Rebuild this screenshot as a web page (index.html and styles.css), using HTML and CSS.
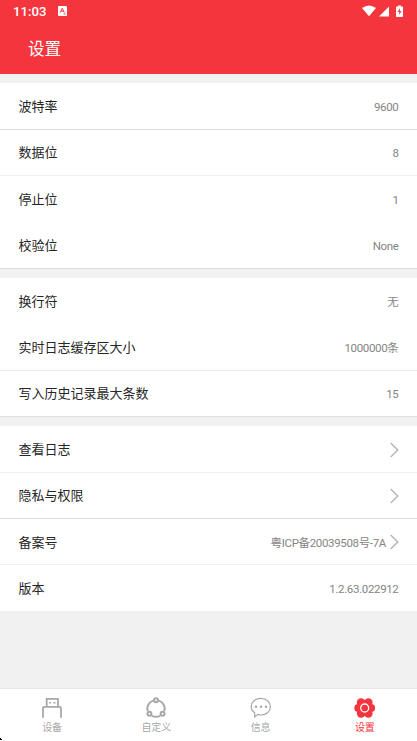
FILE: index.html
```html
<!DOCTYPE html>
<html lang="zh-CN">
<head>
<meta charset="utf-8">
<title>设置</title>
<link rel="stylesheet" href="styles.css">
</head>
<body>
<div class="app">
  <header class="header">
    <div class="status">
      <span class="clock">11:03</span>
      <svg class="badge" width="9" height="10" viewBox="0 0 9 10"><rect width="9" height="10" rx="1" fill="#fff"/><path d="M2.3 6.5 4.3 2.2 6.3 6.5M3 5.2h2.6M5.5 8h2" fill="none" stroke="#f5353d" stroke-width="1"/></svg>
      <svg class="signals" width="42" height="14" viewBox="0 0 42 14"><path d="M0 4Q7-1 14 4L7 12.3Z" fill="#fff"/><path d="M17 12.5 27 2.5v10Z" fill="#fff"/><path d="M36 1.5h3v1h1.5q.5 0 .5.6v9q0 .9-.8.9h-5.4q-.8 0-.8-.9v-9q0-.6.5-.6H36Z" fill="#fff"/><path d="M38 4 35.7 8h1.6v3L39.4 7h-1.5Z" fill="#f5353d"/></svg>
    </div>
    <h1 class="title">设置</h1>
  </header>
  <main class="content">
    <section class="group">
      <div class="row line"><span>波特率</span><span class="value">9600</span></div>
      <div class="row line faint"><span>数据位</span><span class="value">8</span></div>
      <div class="row"><span>停止位</span><span class="value">1</span></div>
      <div class="row line"><span>校验位</span><span class="value">None</span></div>
    </section>
    <section class="group">
      <div class="row"><span>换行符</span><span class="value">无</span></div>
      <div class="row line soft"><span>实时日志缓存区大小</span><span class="value">1000000条</span></div>
      <div class="row line"><span>写入历史记录最大条数</span><span class="value">15</span></div>
    </section>
    <section class="group">
      <div class="row line faint"><span>查看日志</span><svg class="arrow" viewBox="0 0 9 16"><path d="M.7.9 7.8 8 .7 15.1"/></svg></div>
      <div class="row line"><span>隐私与权限</span><svg class="arrow" viewBox="0 0 9 16"><path d="M.7.9 7.8 8 .7 15.1"/></svg></div>
      <div class="row line faint"><span>备案号</span><span class="value">粤ICP备20039508号-7A</span><svg class="arrow" viewBox="0 0 9 16"><path d="M.7.9 7.8 8 .7 15.1"/></svg></div>
      <div class="row last"><span>版本</span><span class="value">1.2.63.022912</span></div>
    </section>
  </main>
  <nav class="tabs">
    <div class="tab"><svg class="icon" viewBox="0 0 22 22"><g fill="none" stroke="currentColor" stroke-width="1.8"><path d="M5.7 9V1.8h11.2V9M3.8 9.8h15q1.2 0 1.2 1.4v9.6M3.8 9.8Q2 9.8 2 11.2v9.6"/></g><path d="M8 5h2v1.6H8zM12.5 5h2v1.6h-2z" fill="currentColor"/></svg><span>设备</span></div>
    <div class="tab"><svg class="icon" viewBox="0 0 22 22"><g fill="none" stroke="currentColor" stroke-width="2"><path d="M8.2 3.6A8.5 8.5 0 0 0 2.6 14M13.8 3.6A8.5 8.5 0 0 1 19.4 14M6.7 18.8q4.3 2 8.6 0"/><circle cx="11" cy="3.3" r="2"/><circle cx="4.4" cy="16.7" r="2"/><circle cx="17.6" cy="16.7" r="2"/></g></svg><span>自定义</span></div>
    <div class="tab"><svg class="icon" viewBox="0 0 22 22"><path d="M7.8 17.4 4.7 20v-4.2C2.4 14.3 1.2 12.2 1.2 9.8c0-4.8 4.3-8.4 9.6-8.4s9.6 3.6 9.6 8.4-4.3 8.2-9.6 8.2q-1.6 0-3-.6Z" fill="none" stroke="currentColor" stroke-width="1.2"/><g fill="currentColor"><circle cx="6" cy="9.8" r="1.25"/><circle cx="11" cy="9.8" r="1.25"/><circle cx="16" cy="9.8" r="1.25"/></g></svg><span>信息</span></div>
    <div class="tab active"><svg class="icon" viewBox="0 0 22 22"><g fill="currentColor"><circle cx="10.7" cy="11" r="8"/><circle cx="7" cy="5.4" r="4.2"/><circle cx="14.4" cy="5.4" r="4.2"/><circle cx="4.4" cy="11" r="4.1"/><circle cx="17" cy="11" r="4.1"/><circle cx="7" cy="16.6" r="4.2"/><circle cx="14.4" cy="16.6" r="4.2"/></g><circle cx="10.7" cy="11" r="4" fill="none" stroke="#fff" stroke-width="1.3"/></svg><span>设置</span></div>
  </nav>
  <svg class="corner" width="3" height="4" viewBox="0 0 3 4"><path d="M0 1h1v1h1v1H0z"/></svg>
</div>
</body>
</html>
```
FILE: styles.css
```css
* { box-sizing: border-box; }
body {
  margin: 0;
  background: #f1f1f1;
  color: #262626;
  font: 13px/18px Roboto, "Noto Sans CJK SC", sans-serif;
}
svg { display: block; flex: none; }
.app {
  position: relative;
  display: flex;
  flex-direction: column;
  height: 741px;
  overflow: hidden;
}
.header {
  flex: none;
  height: 74px;
  background: #f5353d;
  color: #fff;
}
.status {
  display: flex;
  align-items: center;
  height: 22px;
  padding: 0 13px;
}
.clock { width: 33px; padding-top: 2px; font-size: 13.2px; font-weight: 500; white-space: nowrap; }
.badge { margin-left: 12px; }
.signals { margin-left: auto; }
.title {
  margin: 16px 0 0 28px;
  font-size: 16.5px;
  font-weight: 400;
  line-height: 24px;
}
.content { flex: 1; padding-top: 9.3px; }
.group { margin-bottom: 9.4px; background: #fff; }
.row {
  display: flex;
  align-items: center;
  height: 46.33px;
  padding: 2.1px 18.5px 0;
  border-bottom: 1px solid transparent;
}
.last { height: 45.7px; padding-top: 2.7px; }
.line { border-color: #dedede; }
.soft { border-color: #e9e9e9; }
.faint { border-color: #f0f0f0; }
.value { margin-left: auto; color: #858585; font-size: 11.5px; letter-spacing: -.34px; }
.arrow {
  width: 9px;
  height: 16px;
  margin: -1px 0 0 auto;
  fill: none;
  stroke: #b4b4b4;
  stroke-width: 1.4;
}
.value + .arrow { margin-left: 3.5px; }
.tabs {
  flex: none;
  display: flex;
  height: 53px;
  border-top: 1px solid #e8e8e8;
  background: #fff;
}
.tab {
  flex: 1;
  display: flex;
  flex-direction: column;
  align-items: center;
  padding-top: 8px;
  color: #a8a8a8;
  font-size: 10px;
  line-height: 14px;
}
.icon { width: 22px; height: 22px; margin-bottom: 1.6px; overflow: visible; }
.active { color: #f5353d; }
.corner { position: absolute; left: 0; bottom: 0; }
```
